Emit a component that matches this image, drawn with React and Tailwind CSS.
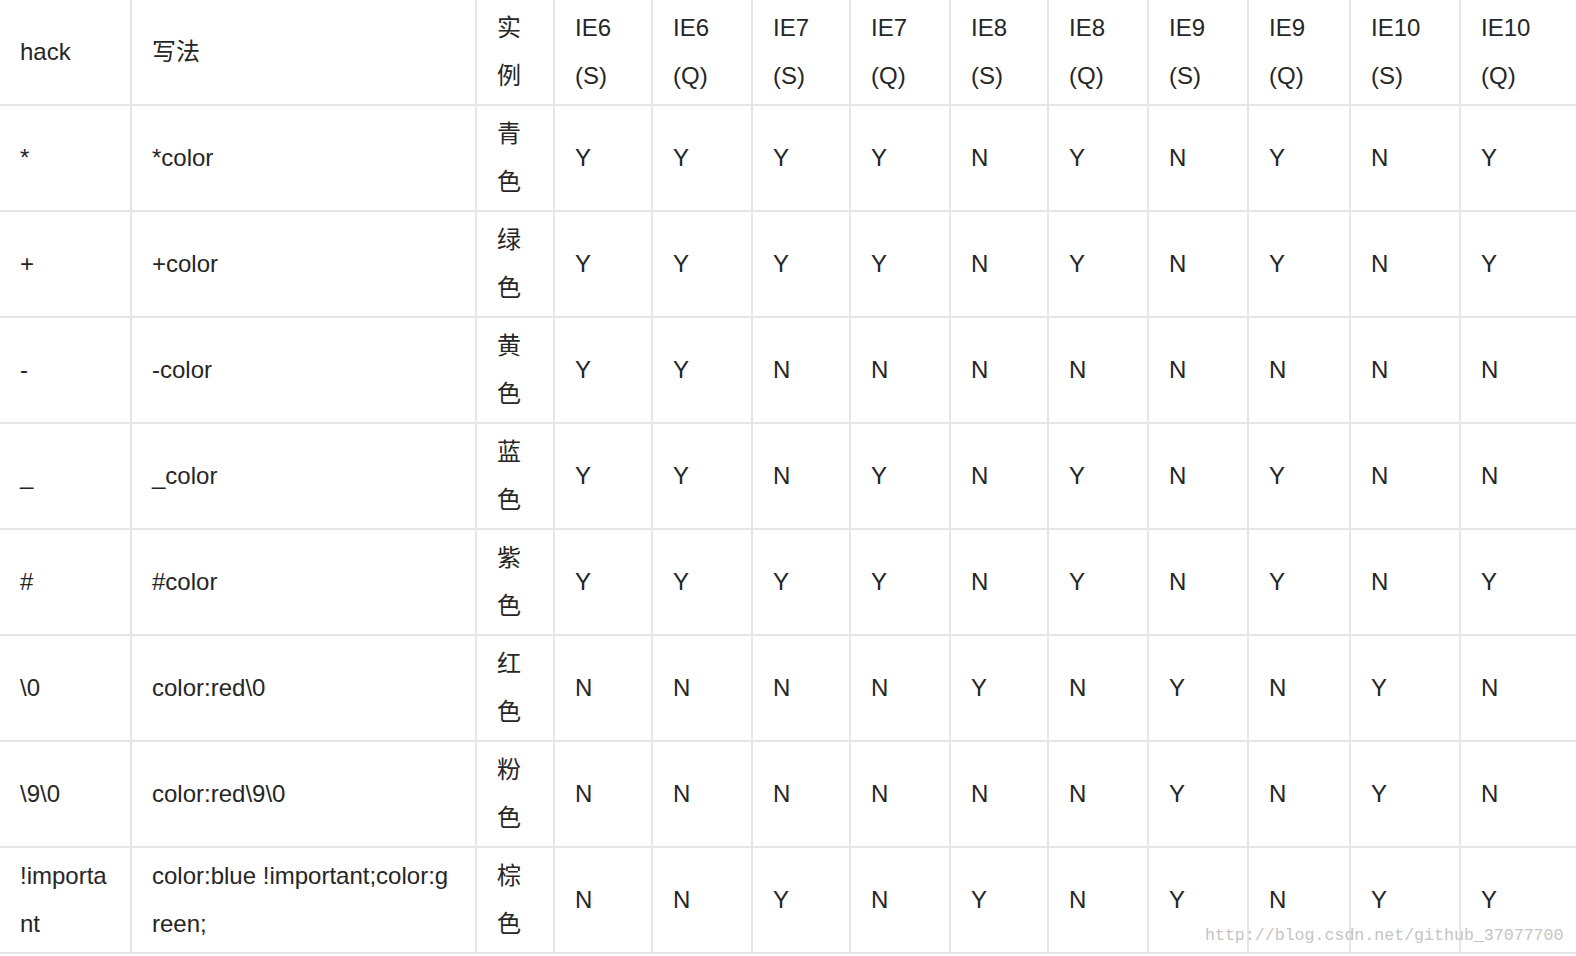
const header = ['hack', '写法', '实例', 'IE6 (S)', 'IE6 (Q)', 'IE7 (S)', 'IE7 (Q)', 'IE8 (S)', 'IE8 (Q)', 'IE9 (S)', 'IE9 (Q)', 'IE10 (S)', 'IE10 (Q)'];

const rows = [
  ['*', '*color', '青色', 'YYYYNYNYNY'],
  ['+', '+color', '绿色', 'YYYYNYNYNY'],
  ['-', '-color', '黄色', 'YYNNNNNNNN'],
  ['_', '_color', '蓝色', 'YYNYNYNYNN'],
  ['#', '#color', '紫色', 'YYYYNYNYNY'],
  ['\\0', 'color:red\\0', '红色', 'NNNNYNYNYN'],
  ['\\9\\0', 'color:red\\9\\0', '粉色', 'NNNNNNYNYN'],
  ['!important', 'color:blue !important;color:green;', '棕色', 'NNYNYNYNYY'],
];

const Cell = ({ children, last }) => (
  <div
    className={`h-[106px] flex items-center pl-[20px] pr-[22px] border-b-2 border-[#e6e6e6] ${last ? '' : 'border-r-2'}`}
  >
    <div className="break-all leading-[48px] w-full">{children}</div>
  </div>
);

export default function App() {
  const table = [header, ...rows.map(r => [r[0], r[1], r[2], ...r[3].split('')])];

  return (
    <div
      className="relative w-[1576px] h-[956px] overflow-hidden bg-white text-[24px] text-[#262626]"
      style={{ fontFamily: '"Liberation Sans", Arial, "Noto Sans CJK SC", sans-serif' }}
    >
      {/* the table */}
      <div className="grid grid-cols-[132px_345px_78px_98px_100px_98px_100px_98px_100px_100px_102px_110px_1fr]">
        {table.map((row, i) =>
          row.map((val, j) => (
            <Cell key={`${i}-${j}`} last={j === row.length - 1}>
              {val}
            </Cell>
          ))
        )}
      </div>

      {/* watermark */}
      <div
        className="absolute left-[1205px] top-[928px] text-[16.6px] leading-none text-[#c4c4c4] whitespace-nowrap"
        style={{ fontFamily: '"Liberation Mono", monospace' }}
      >
        http://blog.csdn.net/github_37077700
      </div>
    </div>
  );
}
